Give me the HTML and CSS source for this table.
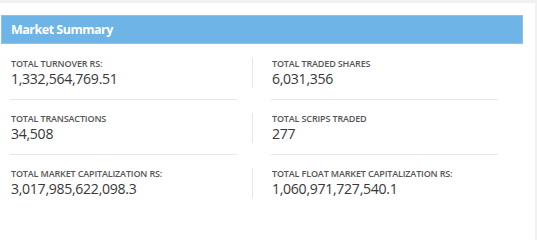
FILE: index.html
```html
<!DOCTYPE html>
<html>
<head>
<meta charset="utf-8">
<link rel="stylesheet" href="styles.css">
</head>
<body>
<div class="card">
  <div class="card-head">Market Summary</div>
  <div class="grid">
    <div class="cell left">
      <div class="stat"><div class="label">TOTAL TURNOVER RS:</div><div class="value">1,332,564,769.51</div></div>
      <div class="rule"></div>
    </div>
    <div class="cell">
      <div class="stat"><div class="label">TOTAL TRADED SHARES</div><div class="value">6,031,356</div></div>
      <div class="rule"></div>
    </div>
    <div class="cell left">
      <div class="stat"><div class="label">TOTAL TRANSACTIONS</div><div class="value">34,508</div></div>
      <div class="rule"></div>
    </div>
    <div class="cell">
      <div class="stat"><div class="label">TOTAL SCRIPS TRADED</div><div class="value">277</div></div>
      <div class="rule"></div>
    </div>
    <div class="cell left">
      <div class="stat"><div class="label">TOTAL MARKET CAPITALIZATION RS:</div><div class="value">3,017,985,622,098.3</div></div>
    </div>
    <div class="cell">
      <div class="stat"><div class="label">TOTAL FLOAT MARKET CAPITALIZATION RS:</div><div class="value">1,060,971,727,540.1</div></div>
    </div>
  </div>
</div>
</body>
</html>
```
FILE: styles.css
```css
html, body {
  margin: 0;
  padding: 0;
}
body {
  background: #f1f1f1;
  font-family: "Open Sans", "Noto Sans", sans-serif;
  width: 537px;
  height: 240px;
  overflow: hidden;
}
.card {
  margin-top: 3px;
  width: 535px;
  height: 237px;
  background: #ffffff;
  padding-top: 12px;
  box-sizing: border-box;
}
.card-head {
  margin-left: 1px;
  width: 522px;
  height: 29px;
  box-sizing: border-box;
  background: #6fb4e7;
  border: 1px solid #8cc3ec;
  color: #ffffff;
  font-weight: 700;
  font-size: 12.5px;
  line-height: 27px;
  padding-left: 9px;
  letter-spacing: -0.5px;
}
.grid {
  display: grid;
  grid-template-columns: 261px 261px;
  margin-left: 1px;
  padding-top: 14px;
}
.cell {
  padding-left: 9px;
}
.stat {
  height: 30px;
  width: 243px;
  box-sizing: border-box;
  padding-top: 0;
  padding-left: 1px;
}
.left .stat {
  border-right: 1px solid #e6e6e6;
}
.label {
  font-size: 9px;
  font-weight: 600;
  line-height: 12px;
  color: #555555;
  letter-spacing: -0.15px;
}
.value {
  font-size: 14.1px;
  line-height: 17px;
  color: #383838;
  letter-spacing: -0.3px;
}
.rule {
  width: 227px;
  height: 1px;
  background: #e8e8e8;
  margin-top: 11px;
  margin-bottom: 13px;
}
```
